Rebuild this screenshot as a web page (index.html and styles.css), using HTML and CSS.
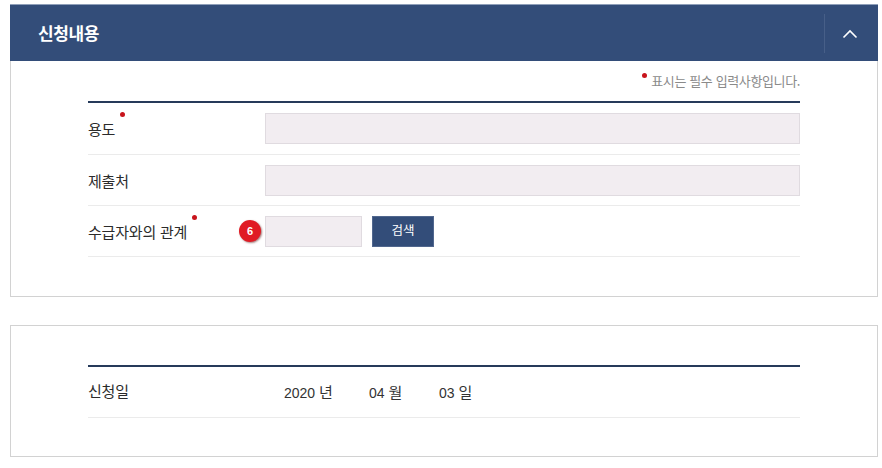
FILE: index.html
```html
<!DOCTYPE html>
<html lang="ko">
<head>
<meta charset="utf-8">
<title>신청내용</title>
<link rel="stylesheet" href="styles.css">
</head>
<body>
<section class="panel-top">
  <header class="bar">
    <h2 class="bar-title">신청내용</h2>
    <div class="bar-toggle">
      <svg width="16" height="10" viewBox="0 0 16 10"><path d="M1.5 8.5 8 2l6.5 6.5" fill="none" stroke="#fff" stroke-width="1.6"/></svg>
    </div>
  </header>
  <div class="panel-body first-body">
    <p class="note"><span class="dot note-dot"></span>표시는 필수 입력사항입니다.</p>
    <div class="table">
      <div class="row">
        <div class="label"><span class="label-text">용도<span class="dot label-dot"></span></span></div>
        <div class="input"></div>
      </div>
      <div class="row">
        <div class="label"><span class="label-text">제출처</span></div>
        <div class="input"></div>
      </div>
      <div class="row">
        <div class="label"><span class="label-text">수급자와의 관계<span class="dot label-dot"></span></span></div>
        <div class="field">
          <span class="badge">6</span>
          <div class="input input-short"></div>
          <button class="search" type="button"><span class="search-text">검색</span></button>
        </div>
      </div>
    </div>
  </div>
</section>
<section class="panel-bottom">
  <div class="table">
    <div class="row row-date">
      <div class="label"><span class="label-text">신청일</span></div>
      <div class="date">
        <span class="date-part date-y">2020 <b>년</b></span>
        <span class="date-part date-m">04 <b>월</b></span>
        <span class="date-part">03 <b>일</b></span>
      </div>
    </div>
  </div>
</section>
</body>
</html>
```
FILE: styles.css
```css
* { box-sizing: border-box; }
html, body { margin: 0; padding: 0; }
body {
  width: 882px;
  height: 468px;
  overflow: hidden;
  background: #fff;
  padding: 4px 4px 0 10px;
  font-family: "Noto Sans CJK KR", "Liberation Sans", sans-serif;
  color: #333;
}
.bar {
  height: 57px;
  background: #334d79;
  border-top: 1px solid #8f9fb9;
  display: flex;
  align-items: center;
  justify-content: space-between;
}
.bar-title {
  margin: 0 0 0 28px;
  font-size: 17px;
  font-weight: 700;
  letter-spacing: -0.4px;
  color: #fff;
  line-height: 24px;
}
.bar-toggle {
  width: 54px;
  height: 39px;
  margin-top: 1px;
  padding-right: 4px;
  border-left: 1px solid #475f88;
  display: flex;
  align-items: center;
  justify-content: center;
}
.panel-body, .panel-bottom {
  border: 1px solid #d2d2d2;
  background: #fff;
}
.first-body {
  border-top: 0;
  height: 236px;
  padding: 0 77px;
}
.note {
  margin: 0;
  height: 40px;
  padding-top: 11px;
  text-align: right;
  font-size: 13px;
  line-height: 18px;
  letter-spacing: -0.38px;
  color: #8a8a8a;
}
.dot {
  display: inline-block;
  width: 5px;
  height: 5px;
  border-radius: 50%;
  background: #c8141c;
}
.note-dot { vertical-align: 8px; margin-right: 4px; }
.table { border-top: 2px solid #263a5a; }
.row {
  display: flex;
  align-items: center;
  height: 51px;
  border-bottom: 1px solid #ebebeb;
}
.row:first-child { height: 52px; }
.label {
  width: 177px;
  flex: none;
  font-size: 15px;
  letter-spacing: -0.2px;
  color: #2b2b2b;
}
.label-text { position: relative; display: inline-block; line-height: 20px; }
.label-dot { position: absolute; right: -10px; top: -7px; }
.input {
  flex: 1;
  height: 31px;
  background: #f2edf1;
  border: 1px solid #e0dbe0;
}
.field { position: relative; display: flex; align-items: center; flex: 1; }
.input-short { flex: none; width: 97px; }
.search {
  margin: 0 0 0 10px;
  width: 62px;
  height: 31px;
  padding: 0 0 3px;
  background: #334d79;
  border: 1px solid #51678e;
  color: #fff;
  font-family: inherit;
  font-size: 12.5px;
  letter-spacing: 0;
}
.search-text { display: block; line-height: 18px; }
.badge {
  position: absolute;
  left: -26px;
  top: 4px;
  width: 22px;
  height: 22px;
  border-radius: 50%;
  background: #e01b24;
  box-shadow: 1px 1px 2px rgba(90, 20, 20, .55);
  color: #fff;
  font-family: "Liberation Sans", sans-serif;
  font-size: 11px;
  font-weight: 700;
  line-height: 22px;
  text-align: center;
}
.panel-bottom {
  margin-top: 28px;
  height: 132px;
  padding: 39px 77px 0;
}
.row.row-date { height: 51px; }
.row-date .label { margin-top: -4px; }
.date { display: flex; font-size: 14px; padding-left: 19px; margin-top: -1px; color: #333; }
.date b { font-weight: 400; font-size: 15px; }
.date-part { font-family: "Liberation Sans", "Noto Sans CJK KR", sans-serif; }
.date-y { width: 85px; }
.date-m { width: 70px; }
```
